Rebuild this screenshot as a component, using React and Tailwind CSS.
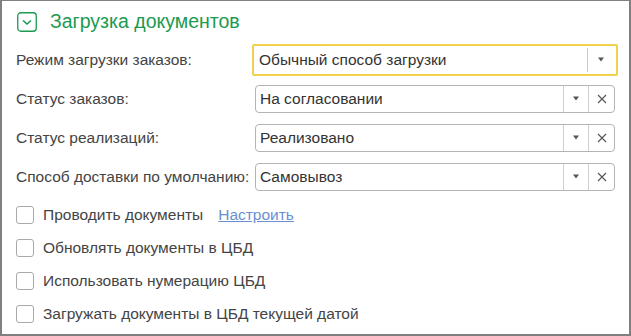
import React from "react";

const font = { fontFamily: '"Liberation Sans", Arial, sans-serif' };

const Triangle = () => (
    <svg width="8" height="5" viewBox="0 0 8 5">
        <path d="M1 0.5h6L4 4.5z" fill="#555" />
    </svg>
);

const Cross = () => (
    <svg width="10" height="10" viewBox="0 0 10 10">
        <path d="M1 1l8 8M9 1l-8 8" stroke="#555" strokeWidth="1.1" />
    </svg>
);

const Field = ({ label, value, clear = true, active = false }) => (
    <div className="flex items-center h-[39px]">
        <div className="w-[239px] shrink-0 text-[15.5px] text-[#444]">{label}</div>
        {active ? (
            <div className="flex items-center flex-1 -mx-[3px] h-[32px] border-2 border-[#f2d24c] rounded-[2px] bg-white">
                <div className="flex-1 pl-[5px] text-[15.5px] text-[#333]">{value}</div>
                <div className="w-[27px] h-[24px] border-l border-[#c8c8c8] flex items-center justify-center mr-[2px]">
                    <Triangle />
                </div>
            </div>
        ) : (
            <div className="flex items-center flex-1 h-[28px] border border-[#b4b4b4] rounded-[4px] bg-white">
                <div className="flex-1 pl-[4px] text-[15.5px] text-[#333]">{value}</div>
                <div className="w-[25px] h-full border-l border-[#d0d0d0] flex items-center justify-center">
                    <Triangle />
                </div>
                {clear && (
                    <div className="w-[26px] h-full border-l border-[#d0d0d0] flex items-center justify-center">
                        <Cross />
                    </div>
                )}
            </div>
        )}
    </div>
);

const Check = ({ label, children }) => (
    <div className="flex items-center h-[33px]">
        <div className="w-[18px] h-[18px] border border-[#a9a9a9] rounded-[3px] bg-white shrink-0" />
        <span className="ml-[9px] text-[15.5px] text-[#444]">{label}</span>
        {children}
    </div>
);

export default function App() {
    return (
        <div
            style={font}
            className="w-[631px] h-[336px] bg-white border-t border-l-2 border-r-2 border-b-2 border-[#808080] pl-[14px] pr-[14px] overflow-hidden"
        >
            {/* Group header */}
            <div className="flex items-center h-[39px] pt-[3px]">
                <svg width="20" height="20" viewBox="0 0 20 20" className="ml-[1px]">
                    <rect x="0.75" y="0.75" width="18.5" height="18.5" rx="3" fill="none" stroke="#1b9a50" strokeWidth="1.3" />
                    <path d="M6 8.5l4 3.5 4-3.5" fill="none" stroke="#1b9a50" strokeWidth="1.6" />
                </svg>
                <span className="ml-[13px] text-[19.5px] text-[#1b9a50]">Загрузка документов</span>
            </div>

            <Field label="Режим загрузки заказов:" value="Обычный способ загрузки" clear={false} active />
            <Field label="Статус заказов:" value="На согласовании" />
            <Field label="Статус реализаций:" value="Реализовано" />
            <Field label="Способ доставки по умолчанию:" value="Самовывоз" />

            <div className="pt-[2px]">
                <Check label="Проводить документы">
                    <span className="ml-[15px] text-[15.5px] text-[#6b8fcf] underline">Настроить</span>
                </Check>
                <Check label="Обновлять документы в ЦБД" />
                <Check label="Использовать нумерацию ЦБД" />
                <Check label="Загружать документы в ЦБД текущей датой" />
            </div>
        </div>
    );
}
